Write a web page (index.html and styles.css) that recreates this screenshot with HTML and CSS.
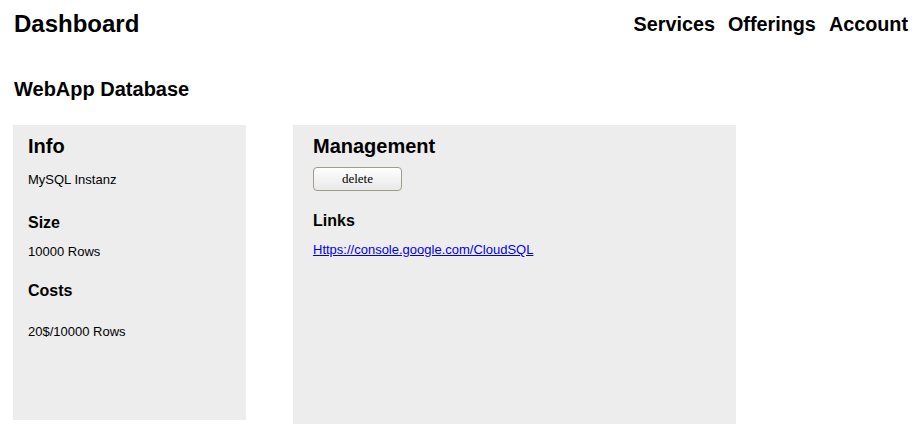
FILE: index.html
```html
<!DOCTYPE html>
<html>
<head>
<meta charset="utf-8">
<link rel="stylesheet" href="styles.css">
</head>
<body>
<header class="topbar">
  <div class="brand">Dashboard</div>
  <nav class="nav">
    <a class="nav-item">Services</a>
    <a class="nav-item">Offerings</a>
    <a class="nav-item">Account</a>
  </nav>
</header>
<h3 class="page-title">WebApp Database</h3>
<main class="panels">
  <section class="panel panel-info">
    <h2 class="panel-title">Info</h2>
    <p class="text t-info">MySQL Instanz</p>
    <h4 class="sub sub-size">Size</h4>
    <p class="text t-size">10000 Rows</p>
    <h4 class="sub sub-costs">Costs</h4>
    <p class="text t-costs">20$/10000 Rows</p>
  </section>
  <section class="panel panel-manage">
    <h2 class="panel-title">Management</h2>
    <button class="btn">delete</button>
    <h4 class="sub sub-links">Links</h4>
    <p class="text t-link"><a href="#" class="link">Https://console.google.com/CloudSQL</a></p>
  </section>
</main>
</body>
</html>
```
FILE: styles.css
```css
* { box-sizing: border-box; }
body {
  margin: 0;
  font-family: "Liberation Sans", Arial, sans-serif;
  color: #000;
  background: #fff;
}
.topbar {
  display: flex;
  justify-content: space-between;
  align-items: flex-start;
  padding: 10px 11px 0 14px;
}
.brand {
  font-size: 24px;
  line-height: 28px;
  font-weight: bold;
}
.nav {
  display: flex;
  gap: 13px;
  align-items: baseline;
}
.nav-item {
  font-size: 19.8px;
  line-height: 28px;
  font-weight: bold;
  color: #000;
}
.page-title {
  margin: 39px 0 0 14px;
  font-size: 20px;
  line-height: 24px;
  font-weight: bold;
}
.panels {
  display: flex;
  align-items: flex-start;
  gap: 47px;
  margin-top: 24px;
  padding-left: 13px;
}
.panel {
  background: #ededed;
  padding: 9px 15px 0 15px;
}
.panel-info { width: 233px; height: 295px; }
.panel-manage { width: 443px; height: 299px; padding-left: 20px; }
.panel-title {
  margin: 0;
  font-size: 20px;
  line-height: 24px;
  font-weight: bold;
}
.text {
  margin: 0;
  font-size: 13px;
  line-height: 16px;
}
.sub {
  margin: 0;
  font-size: 16px;
  line-height: 20px;
  font-weight: bold;
}
.t-info { margin-top: 14px; }
.sub-size { margin-top: 25px; }
.t-size { margin-top: 11px; }
.sub-costs { margin-top: 21px; }
.t-costs { margin-top: 23px; }
.btn {
  display: block;
  margin-top: 9px;
  width: 89px;
  height: 24px;
  padding: 0;
  border: 1px solid #a19a8e;
  border-radius: 4px;
  background: linear-gradient(#ffffff, #f3f3f3 50%, #e9e9e9);
  font-family: "Liberation Serif", "Times New Roman", serif;
  font-size: 13px;
  color: #000;
}
.sub-links { margin-top: 20px; }
.t-link { margin-top: 11px; }
.link { color: #0000ee; text-decoration: underline; }
```
